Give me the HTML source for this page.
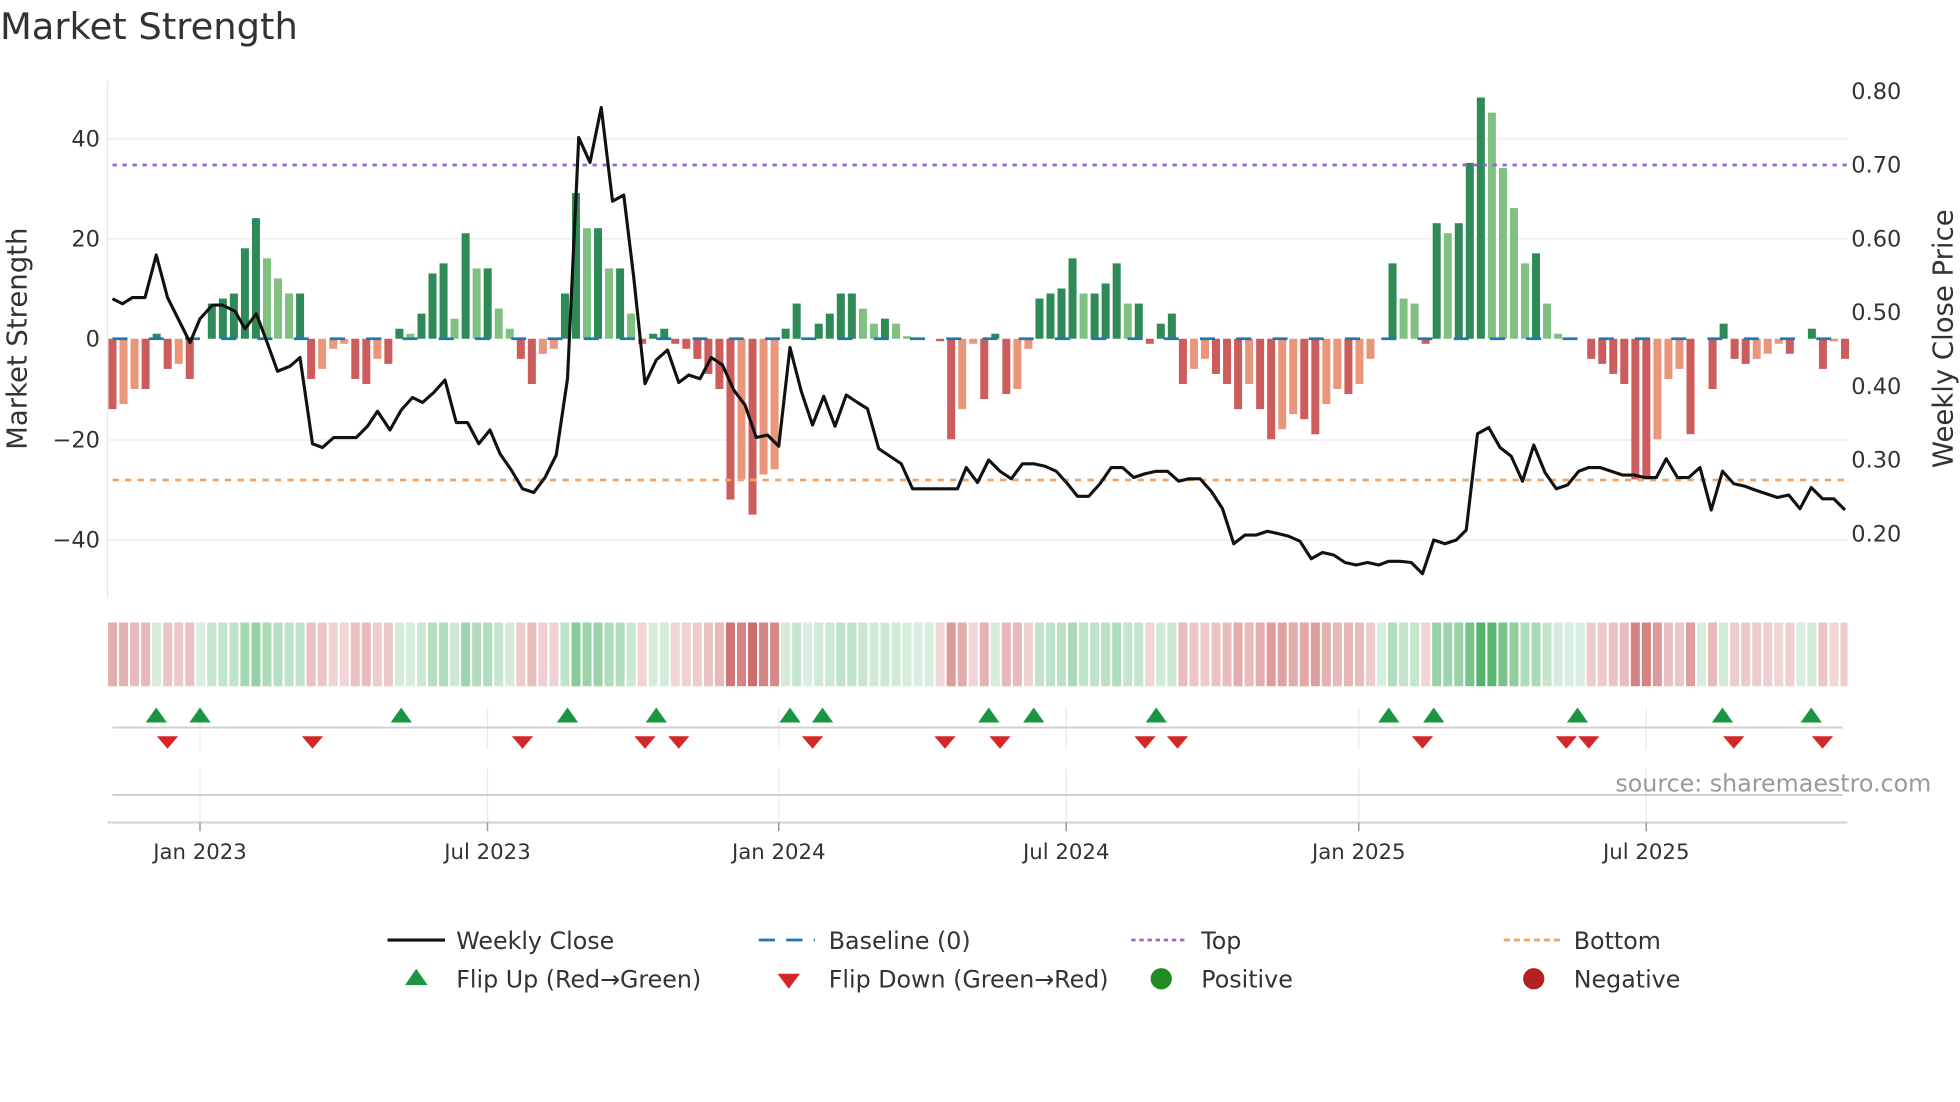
<!DOCTYPE html>
<html><head><meta charset="utf-8">
<style>
html,body{margin:0;padding:0;background:#fff;}
svg{display:block;font-family:"DejaVu Sans","Liberation Sans",sans-serif;}
</style></head>
<body>
<svg id="c" width="1960" height="1102" viewBox="0 0 1568 881.6" xmlns="http://www.w3.org/2000/svg">
<rect width="1568" height="882" fill="#fff"/>
<text x="0" y="31" font-size="29.5" fill="#333">Market Strength</text>
<g stroke="#eceff2" stroke-width="1.2">
<line x1="86" y1="111" x2="1478" y2="111"/>
<line x1="86" y1="191" x2="1478" y2="191"/>
<line x1="86" y1="352" x2="1478" y2="352"/>
<line x1="86" y1="432" x2="1478" y2="432"/>
</g>
<line x1="86" y1="65" x2="86" y2="478" stroke="#e6e6e6" stroke-width="1"/>
<g font-size="18" fill="#333" text-anchor="end">
<text x="80" y="117">40</text><text x="80" y="197">20</text><text x="80" y="277">0</text>
<text x="80" y="358">−20</text><text x="80" y="438">−40</text>
</g>
<g font-size="18" fill="#333">
<text x="1481" y="79">0.80</text><text x="1481" y="138">0.70</text><text x="1481" y="197">0.60</text>
<text x="1481" y="256">0.50</text><text x="1481" y="315">0.40</text><text x="1481" y="374">0.30</text><text x="1481" y="433">0.20</text>
</g>
<text transform="translate(21,271) rotate(-90)" font-size="22" fill="#333" text-anchor="middle">Market Strength</text>
<text transform="translate(1562,271) rotate(-90)" font-size="22" fill="#333" text-anchor="middle">Weekly Close Price</text>
<g id="bars"></g>
<line x1="90" y1="271" x2="1478" y2="271" stroke="#1f77b4" stroke-width="2.2" stroke-dasharray="12 17"/>
<line x1="90" y1="132" x2="1478" y2="132" stroke="#9966cc" stroke-width="2.2" stroke-dasharray="3.5 4.5"/>
<line x1="90" y1="384" x2="1478" y2="384" stroke="#f4a460" stroke-width="2.2" stroke-dasharray="5 5"/>
<polyline id="price" fill="none" stroke="#111" stroke-width="2.5" stroke-linejoin="round"/>
<g id="heat"></g>
<g stroke="#e8eaee" stroke-width="1">
<line x1="160" y1="566" x2="160" y2="600"/><line x1="390" y1="566" x2="390" y2="600"/><line x1="623" y1="566" x2="623" y2="600"/>
<line x1="853" y1="566" x2="853" y2="600"/><line x1="1087" y1="566" x2="1087" y2="600"/><line x1="1317" y1="566" x2="1317" y2="600"/>
<line x1="160" y1="615" x2="160" y2="658"/><line x1="390" y1="615" x2="390" y2="658"/><line x1="623" y1="615" x2="623" y2="658"/>
<line x1="853" y1="615" x2="853" y2="658"/><line x1="1087" y1="615" x2="1087" y2="658"/><line x1="1317" y1="615" x2="1317" y2="658"/>
</g>
<line x1="90" y1="582" x2="1474" y2="582" stroke="#d0d0d0" stroke-width="1.6"/>
<line x1="90" y1="636" x2="1474" y2="636" stroke="#d0d0d0" stroke-width="1.6"/>
<line x1="86" y1="658" x2="1478" y2="658" stroke="#cfcfcf" stroke-width="1.6"/>
<g stroke="#999" stroke-width="1.2">
<line x1="160" y1="658" x2="160" y2="665"/><line x1="390" y1="658" x2="390" y2="665"/><line x1="623" y1="658" x2="623" y2="665"/>
<line x1="853" y1="658" x2="853" y2="665"/><line x1="1087" y1="658" x2="1087" y2="665"/><line x1="1317" y1="658" x2="1317" y2="665"/>
</g>
<g id="tri"></g>
<g font-size="17" fill="#333" text-anchor="middle">
<text x="160" y="687">Jan 2023</text><text x="390" y="687">Jul 2023</text><text x="623" y="687">Jan 2024</text>
<text x="853" y="687">Jul 2024</text><text x="1087" y="687">Jan 2025</text><text x="1317" y="687">Jul 2025</text>
</g>
<text x="1545" y="633" font-size="19" fill="#999" text-anchor="end">source: sharemaestro.com</text>
<g font-size="19" fill="#333">
<line x1="310" y1="752" x2="356" y2="752" stroke="#111" stroke-width="2.5"/>
<text x="365" y="759">Weekly Close</text>
<line x1="607" y1="752" x2="652" y2="752" stroke="#1f77b4" stroke-width="2.2" stroke-dasharray="13 9"/>
<text x="663" y="759">Baseline (0)</text>
<line x1="905" y1="752" x2="950" y2="752" stroke="#9966cc" stroke-width="2.2" stroke-dasharray="3.5 3"/>
<text x="961" y="759">Top</text>
<line x1="1203" y1="752" x2="1248" y2="752" stroke="#f4a460" stroke-width="2.2" stroke-dasharray="5 3"/>
<text x="1259" y="759">Bottom</text>
<polygon points="324,788 342,788 333,775" fill="#1a9641"/>
<text x="365" y="790">Flip Up (Red→Green)</text>
<polygon points="622,779 640,779 631,791" fill="#d62728"/>
<text x="663" y="790">Flip Down (Green→Red)</text>
<circle cx="929" cy="783" r="8.5" fill="#228b22"/>
<text x="961" y="790">Positive</text>
<circle cx="1227" cy="783" r="8.5" fill="#b22222"/>
<text x="1259" y="790">Negative</text>
</g>
</svg>
<script>
var NS="http://www.w3.org/2000/svg";
var vals=[-14,-13,-10,-10,1,-6,-5,-8,0,7,8,9,18,24,16,12,9,9,-8,-6,-2,-1,-8,-9,-4,-5,2,1,5,13,15,4,21,14,14,6,2,-4,-9,-3,-2,9,29,22,22,14,14,5,-1,1,2,-1,-2,-4,-7,-10,-32,-28,-35,-27,-26,2,7,0,3,5,9,9,6,3,4,3,0.5,0,0,-0.5,-20,-14,-1,-12,1,-11,-10,-2,8,9,10,16,9,9,11,15,7,7,-1,3,5,-9,-6,-4,-7,-9,-14,-9,-14,-20,-18,-15,-16,-19,-13,-10,-11,-9,-4,0,15,8,7,-1,23,21,23,35,48,45,34,26,15,17,7,1,0,0,-4,-5,-7,-9,-28,-28,-20,-8,-6,-19,0,-10,3,-4,-5,-4,-3,-1,-3,0,2,-6,-0.5,-4];
var n=vals.length, x0=90, step=(1476-90)/(n-1);
var bars=document.getElementById('bars'), heat=document.getElementById('heat');
function el(t,a,p){var e=document.createElementNS(NS,t);for(var k in a)e.setAttribute(k,a[k]);p.appendChild(e);return e;}
for(var i=0;i<n;i++){
  var v=vals[i], x=x0+i*step, prev=i>0?vals[i-1]:0;
  var rising=Math.abs(v)>=Math.abs(prev)||(v>0)!=(prev>0);
  var col=v>=0?(rising?'#2e8b57':'#80c080'):(rising?'#cd5c5c':'#e9967a');
  var h=Math.abs(v)*4.02;
  if(h>0.3) el('rect',{x:x-3.2,y:v>=0?271-h:271,width:6.4,height:h,fill:col},bars);
  var a, c;
  if(v>=0){a=0.18+0.62*Math.min(v/48,1);c='rgba(40,160,70,'+a+')';}
  else{a=0.2+0.55*Math.min(-v/35,1);c='rgba(190,60,60,'+a+')';}
  var hx=x-step/2+0.8, hw=step-1.6;
  if(hx+hw>1478) hw=1478-hx;
  el('rect',{x:hx,y:498,width:hw,height:51,fill:c},heat);
}
var pts=[[90,239],[98,243],[106,238],[116,238],[125,204],[134,238],[143,256],[152,274],[160,255],[170,244],[178,244],[188,249],[196,263],[205,251],[213,272],[222,297],[232,293],[240,286],[250,355],[258,358],[267,350],[276,350],[285,350],[294,341],[302,329],[312,344],[321,328],[330,318],[338,322],[347,314],[356,304],[365,338],[374,338],[383,355],[392,344],[400,363],[409,376],[418,391],[427,394],[436,382],[445,364],[454,303],[463,110],[472,130],[481,86],[490,161],[499,156],[507,222],[516,307],[525,288],[534,280],[543,306],[551,300],[560,303],[569,286],[578,292],[587,312],[596,324],[605,350],[614,348],[623,357],[632,278],[641,313],[650,340],[659,317],[668,341],[677,316],[686,322],[694,327],[703,359],[712,365],[721,371],[730,391],[766,391],[773,374],[782,386],[791,368],[800,377],[809,383],[818,371],[827,371],[836,373],[845,377],[854,387],[862,397],[871,397],[880,387],[889,374],[898,374],[907,382],[916,379],[925,377],[934,377],[943,385],[951,383],[960,383],[969,393],[978,407],[987,435],[996,428],[1005,428],[1014,425],[1023,427],[1031,429],[1040,433],[1049,447],[1058,442],[1067,444],[1076,450],[1085,452],[1094,450],[1103,452],[1111,449],[1120,449],[1129,450],[1138,459],[1147,432],[1156,435],[1165,432],[1173,424],[1182,347],[1191,342],[1200,358],[1209,365],[1218,385],[1227,356],[1236,378],[1245,391],[1254,388],[1263,377],[1271,374],[1280,374],[1289,377],[1298,380],[1307,380],[1316,382],[1325,382],[1333,367],[1342,382],[1351,382],[1360,374],[1369,408],[1378,377],[1387,387],[1396,389],[1404,392],[1413,395],[1422,398],[1431,396],[1440,407],[1449,390],[1458,399],[1467,399],[1476,408]];
document.getElementById('price').setAttribute('points',pts.map(function(p){return p.join(',')}).join(' '));
var tri=document.getElementById('tri');
[125,160,321,454,525,632,658,791,827,925,1111,1147,1262,1378,1449].forEach(function(x){
 el('polygon',{points:(x-8.5)+',578 '+(x+8.5)+',578 '+x+',566',fill:'#1a9641'},tri);});
[134,250,418,516,543,650,756,800,916,942,1138,1253,1271,1387,1458].forEach(function(x){
 el('polygon',{points:(x-8.5)+',589 '+(x+8.5)+',589 '+x+',599',fill:'#d62728'},tri);});
</script>
</body></html>
